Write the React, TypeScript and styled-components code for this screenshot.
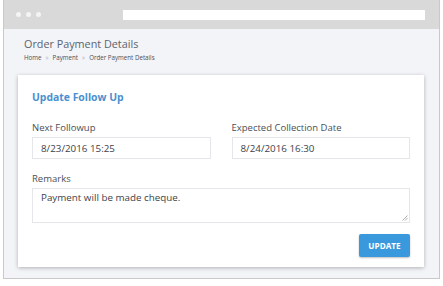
import React from "react";
import styled, { createGlobalStyle } from "styled-components";

const GlobalStyle = createGlobalStyle`
  html, body {
    margin: 0;
    padding: 0;
    background: #ffffff;
  }
  body {
    font-family: "Open Sans", "Liberation Sans", sans-serif;
  }
  * {
    box-sizing: border-box;
  }
`;

const Page = styled.div`
  width: 443px;
  height: 286px;
  padding: 0 3px;
`;

const BrowserFrame = styled.div`
  height: 279px;
  border: 1px solid #c9c9c9;
  border-top: none;
  display: flex;
  flex-direction: column;
  background: #f3f4f8;
`;

const TopBar = styled.div`
  height: 29px;
  background: #d9d9d9;
  display: flex;
  align-items: center;
  padding: 0 14px 0 12px;
  flex-shrink: 0;
`;

const Dots = styled.div`
  display: flex;
  gap: 5px;
  width: 107px;
`;

const Dot = styled.span`
  width: 5px;
  height: 5px;
  border-radius: 50%;
  background: #f4f4f4;
`;

const AddressBar = styled.div`
  flex: 1;
  height: 10px;
  background: #ffffff;
`;

const Content = styled.div`
  flex: 1;
  padding: 7px 15px 0 14px;
  display: flex;
  flex-direction: column;
`;

const PageTitle = styled.h1`
  margin: 0 0 0 6px;
  font-size: 10.8px;
  font-weight: 400;
  color: #5b636e;
  line-height: 16px;
`;

const Breadcrumb = styled.div`
  margin: 1px 0 0 6px;
  display: flex;
  align-items: center;
  gap: 4px;
  font-size: 6.2px;
  color: #4a4f57;
  line-height: 10px;
`;

const Sep = styled.span`
  color: #b0b4ba;
`;

const Card = styled.div`
  margin-top: 12px;
  background: #ffffff;
  box-shadow: 0 1px 4px rgba(0, 0, 0, 0.28);
  padding: 14px 14px 10px 14px;
`;

const CardTitle = styled.h2`
  margin: 0;
  font-size: 10.4px;
  font-weight: 700;
  color: #4a90d0;
  line-height: 16px;
`;

const FieldRow = styled.div`
  display: grid;
  grid-template-columns: 1fr 1fr;
  column-gap: 21px;
  margin-top: 16px;
`;

const Field = styled.div`
  display: flex;
  flex-direction: column;
`;

const Label = styled.label`
  font-size: 9.5px;
  color: #4a4f57;
  line-height: 14px;
  margin-bottom: 2px;
`;

const Input = styled.div`
  height: 22px;
  border: 1px solid #e4e6ea;
  padding: 0 8px;
  display: flex;
  align-items: center;
  font-size: 9.8px;
  color: #3d4249;
`;

const RemarksField = styled(Field)`
  margin-top: 13px;
`;

const TextArea = styled.div`
  position: relative;
  height: 35px;
  border: 1px solid #e4e6ea;
  padding: 2px 8px;
  font-size: 9.8px;
  color: #3d4249;
  line-height: 14px;
`;

const Grip = styled.svg`
  position: absolute;
  right: 1px;
  bottom: 1px;
`;

const Actions = styled.div`
  display: flex;
  justify-content: flex-end;
  margin-top: 11px;
`;

const Button = styled.button`
  width: 51px;
  height: 23px;
  border: none;
  border-radius: 2px;
  background: #3a98dc;
  color: #ffffff;
  font-family: inherit;
  font-size: 8.2px;
  font-weight: 700;
  box-shadow: 0 1px 2px rgba(0, 0, 0, 0.25);
  padding: 0;
`;

export default function App() {
  return (
    <Page>
      <GlobalStyle />
      <BrowserFrame>
        <TopBar>
          <Dots>
            <Dot />
            <Dot />
            <Dot />
          </Dots>
          <AddressBar />
        </TopBar>
        <Content>
          <PageTitle>Order Payment Details</PageTitle>
          <Breadcrumb>
            <span>Home</span>
            <Sep>»</Sep>
            <span>Payment</span>
            <Sep>»</Sep>
            <span>Order Payment Details</span>
          </Breadcrumb>
          <Card>
            <CardTitle>Update Follow Up</CardTitle>
            <FieldRow>
              <Field>
                <Label>Next Followup</Label>
                <Input>8/23/2016 15:25</Input>
              </Field>
              <Field>
                <Label>Expected Collection Date</Label>
                <Input>8/24/2016 16:30</Input>
              </Field>
            </FieldRow>
            <RemarksField>
              <Label>Remarks</Label>
              <TextArea>
                Payment will be made cheque.
                <Grip width="6" height="6" viewBox="0 0 6 6">
                  <path d="M5.5 0.5 L0.5 5.5 M5.5 3 L3 5.5" stroke="#9a9a9a" strokeWidth="0.8" />
                </Grip>
              </TextArea>
            </RemarksField>
            <Actions>
              <Button>UPDATE</Button>
            </Actions>
          </Card>
        </Content>
      </BrowserFrame>
    </Page>
  );
}
